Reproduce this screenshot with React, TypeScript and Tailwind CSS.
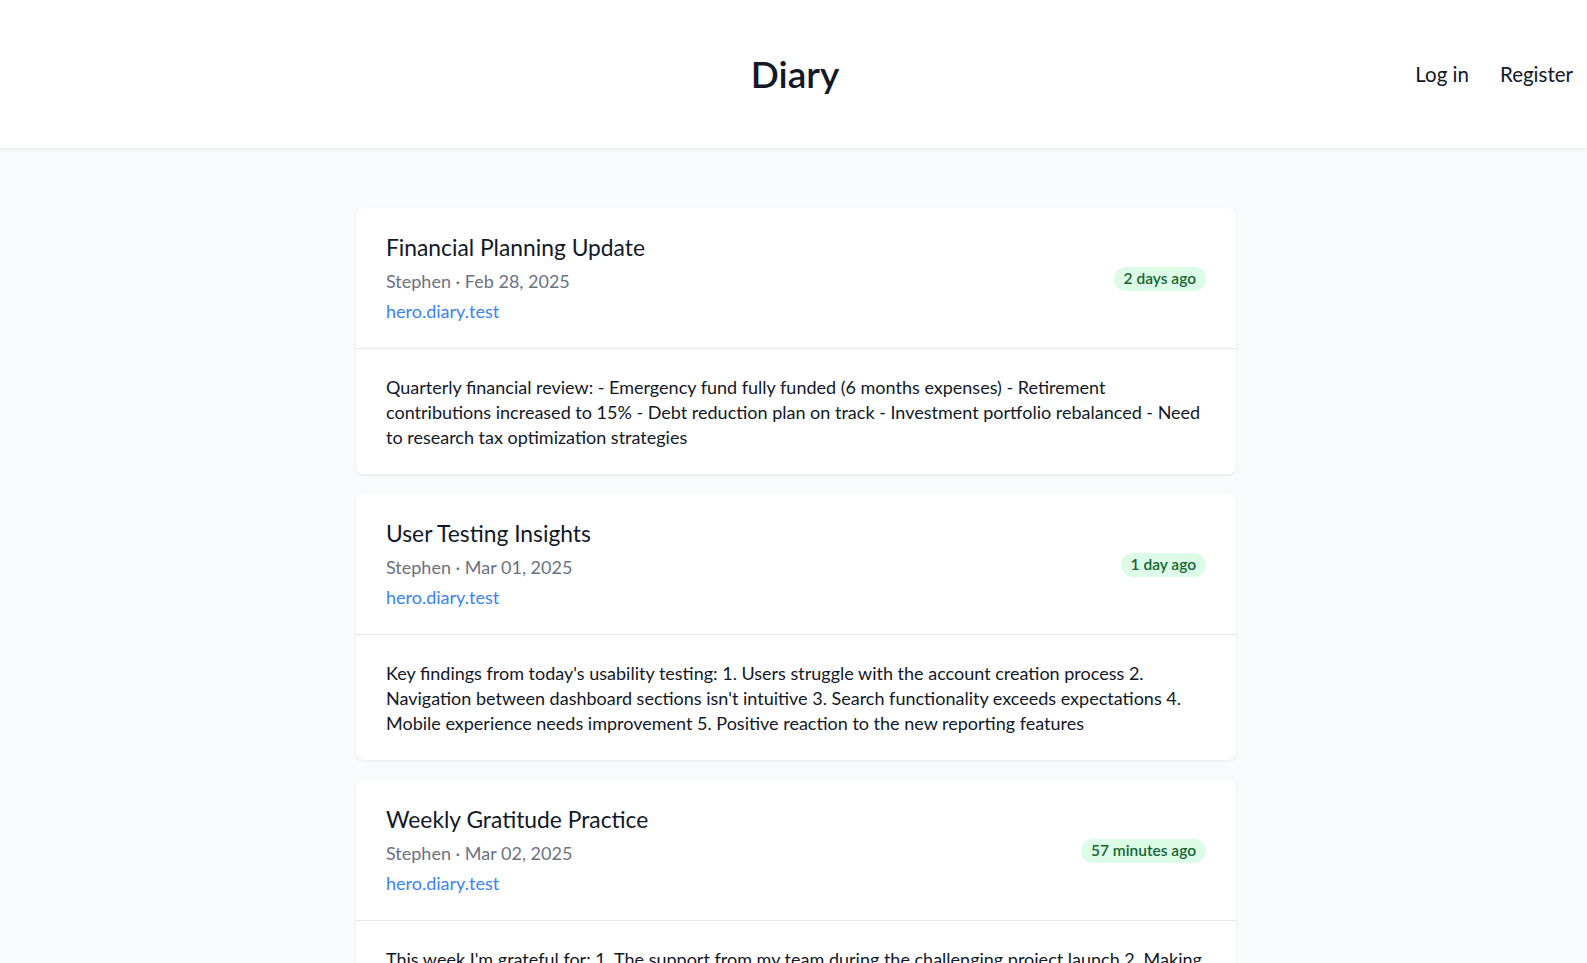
import React from "react";

const entries = [
  {
    title: "Financial Planning Update",
    date: "Feb 28, 2025",
    ago: "2 days ago",
    body: "Quarterly financial review: - Emergency fund fully funded (6 months expenses) - Retirement contributions increased to 15% - Debt reduction plan on track - Investment portfolio rebalanced - Need to research tax optimization strategies",
  },
  {
    title: "User Testing Insights",
    date: "Mar 01, 2025",
    ago: "1 day ago",
    body: "Key findings from today's usability testing: 1. Users struggle with the account creation process 2. Navigation between dashboard sections isn't intuitive 3. Search functionality exceeds expectations 4. Mobile experience needs improvement 5. Positive reaction to the new reporting features",
  },
  {
    title: "Weekly Gratitude Practice",
    date: "Mar 02, 2025",
    ago: "57 minutes ago",
    body: "This week I'm grateful for: 1. The support from my team during the challenging project launch 2. Making time for self-care and exercise 3. A meaningful conversation with an old friend 4. Learning something new every day",
  },
];

export default function App() {
  return (
    <div className="min-h-screen bg-[#f9fafb] text-[#111827]" style={{ fontFamily: "Lato, 'Noto Sans', sans-serif" }}>
      <header className="relative h-[148px] bg-white shadow-[0_1px_3px_rgba(0,0,0,0.08)] flex items-center justify-center">
        <h1 className="text-[37px] font-semibold leading-none -mt-[2px] ml-[3px]">Diary</h1>
        <nav className="absolute right-[14px] top-0 h-full flex items-center gap-[31px] text-[20.5px]">
          <span>Log in</span>
          <span>Register</span>
        </nav>
      </header>
      <main className="pt-[60px] pb-10 pl-[5px] flex flex-col items-center gap-[20px]">
        {entries.map((e) => (
          <article key={e.title} className="w-[880px] bg-white rounded-lg shadow-[0_1px_3px_rgba(0,0,0,0.08)]">
            <div className="flex items-center justify-between px-[30px] pt-[26px] pb-[25px] border-b border-[#e5e7eb]">
              <div>
                <h2 className="text-[22.8px] leading-7 -mt-[1px] mb-[1px]">{e.title}</h2>
                <p className="mt-[8px] text-[18px] leading-6 text-[#6b7280]">Stephen · {e.date}</p>
                <p className="mt-[6px] text-[18px] leading-6 text-[#3b82f6]">hero.diary.test</p>
              </div>
              <span className="rounded-full bg-[#dcfce7] text-[#166534] text-[15.5px] font-semibold px-[10px] h-[24px] flex items-center">{e.ago}</span>
            </div>
            <div className="px-[30px] pt-[26px] pb-[24px] text-[18px] leading-[25px]">{e.body}</div>
          </article>
        ))}
      </main>
    </div>
  );
}
